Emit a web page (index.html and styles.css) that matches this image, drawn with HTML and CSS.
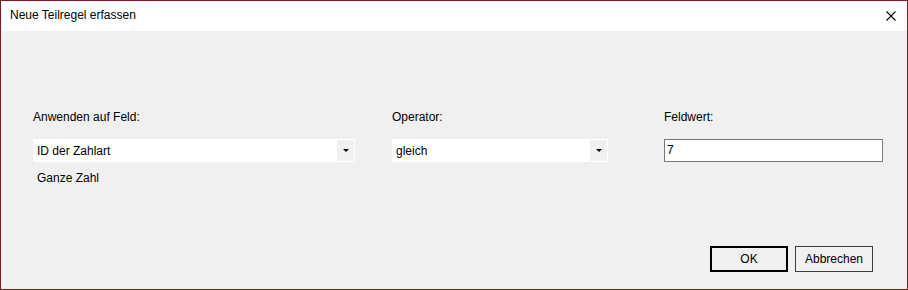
FILE: index.html
```html
<!DOCTYPE html>
<html lang="de">
<head>
	<meta charset="UTF-8">
	<title>Neue Teilregel erfassen</title>
	<link rel="stylesheet" href="styles.css">
</head>
<body>
	<div class="window">
		<div class="titlebar">
			<span class="title">Neue Teilregel erfassen</span>
			<svg class="close" width="10" height="10" viewBox="0 0 10 10">
				<path d="M0.5 0.5 L9.5 9.5 M9.5 0.5 L0.5 9.5" stroke="#000" stroke-width="1.1" fill="none"/>
			</svg>
		</div>
		<div class="content">
			<div class="fields">
				<div class="field">
					<label>Anwenden auf Feld:</label>
					<div class="combo wide">
						<span>ID der Zahlart</span>
						<div class="drop"><i></i></div>
					</div>
					<div class="hint">Ganze Zahl</div>
				</div>
				<div class="field">
					<label>Operator:</label>
					<div class="combo narrow">
						<span>gleich</span>
						<div class="drop"><i></i></div>
					</div>
				</div>
				<div class="field">
					<label>Feldwert:</label>
					<div class="textbox">7</div>
				</div>
			</div>
			<div class="buttons">
				<button class="btn default">OK</button>
				<button class="btn">Abbrechen</button>
			</div>
		</div>
	</div>
</body>
</html>
```

FILE: styles.css
```css
*{
	margin: 0;
	padding: 0;
	box-sizing: border-box;
}
body{
	font: 12px 'Liberation Sans', Arial, sans-serif;
	color: #000;
	background-color: #f0f0f0;
}
.window{
	width: 908px;
	height: 290px;
	border: 1px solid #7b1d1d;
	background-color: #f0f0f0;
	display: flex;
	flex-direction: column;
}
.titlebar{
	height: 30px;
	background-color: white;
	display: flex;
	align-items: center;
	justify-content: space-between;
	padding: 0 11px 0 9px;
}
.title{
	font-size: 12px;
	line-height: 16px;
	padding-bottom: 2px;
}
.close{
	display: block;
	margin-bottom: 1px;
}
.content{
	flex: 1;
	display: flex;
	flex-direction: column;
	padding: 78px 34px 17px 32px;
}
.fields{
	display: grid;
	grid-template-columns: 359px 272px 219px;
}
.field label{
	display: block;
	line-height: 16px;
	height: 16px;
	margin-bottom: 14px;
}
.combo{
	height: 23px;
	background-color: white;
	border: 1px solid white;
	display: flex;
	align-items: center;
	justify-content: space-between;
}
.combo span{
	padding-left: 3px;
	line-height: 16px;
}
.combo.wide{
	width: 322px;
}
.combo.narrow{
	width: 216px;
}
.drop{
	width: 17px;
	height: 21px;
	background-color: #f0f0f0;
	display: flex;
	align-items: center;
	justify-content: center;
}
.drop i{
	display: block;
	width: 0;
	height: 0;
	border-left: 3px solid transparent;
	border-right: 3px solid transparent;
	border-top: 3px solid #000;
	margin-left: 1px;
}
.hint{
	margin-top: 8px;
	padding-left: 4px;
	line-height: 16px;
}
.textbox{
	width: 219px;
	height: 23px;
	border: 1px solid #7a7a7a;
	background-color: white;
	line-height: 20px;
	padding-left: 2px;
}
.buttons{
	margin-top: auto;
	display: flex;
	justify-content: flex-end;
	gap: 7px;
}
.btn{
	width: 78px;
	height: 26px;
	font: 12px 'Liberation Sans', Arial, sans-serif;
	color: #000;
	background-color: #f0f0f0;
	border: 1px solid #3c3c3c;
}
.btn.default{
	border: 2px solid #000;
}
```
